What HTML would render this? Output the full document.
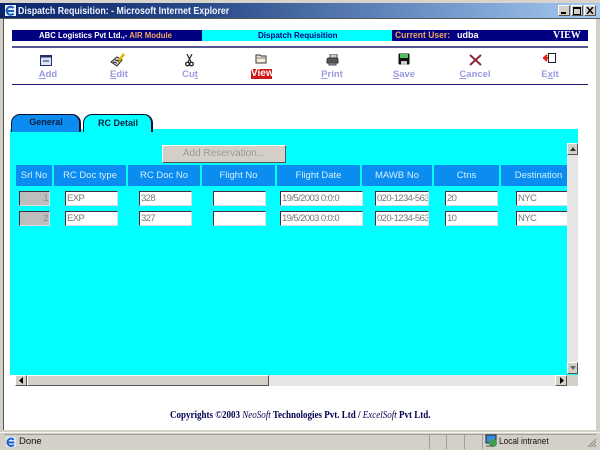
<!DOCTYPE html>
<html>
<head>
<meta charset="utf-8">
<style>
html,body{margin:0;padding:0;background:#fff}
#p{position:relative;width:600px;height:450px;overflow:hidden;background:#fff;font-family:"Liberation Sans",sans-serif;filter:blur(.3px)}
#p div,#p span.a,#p svg{position:absolute}
.t{white-space:nowrap}
.bar{background:#000080;height:11px;top:30px}
.tb{top:69px;width:60px;text-align:center;font-size:9.500px;font-weight:bold;color:#9a9ae0;line-height:12px}
.tb u{text-decoration:underline}
.h{top:165px;height:21px;background:#0a8cf0;color:#d4f0ff;font-size:9.500px;line-height:21px;text-align:center}
.i{height:13px;background:#fff;border-top:1px solid #4a2a3a;border-left:1px solid #4a2a3a;border-right:1px solid #ddd;border-bottom:1px solid #ddd;box-sizing:content-box;font-size:9.500px;line-height:13px;color:#777;padding-left:1px;overflow:hidden;white-space:nowrap;letter-spacing:-.6px}
.s{background:#bdbdc0;text-align:right;padding:0 1px 0 0;color:#888}
.btn{background:#d4d0c8;border-top:1px solid #fff;border-left:1px solid #fff;border-right:1px solid #555;border-bottom:1px solid #555}
</style>
</head>
<body>
<div id="p">
<!-- window frame -->
<div style="left:0;top:0;width:600px;height:3px;background:#d8d4cc"></div>
<div style="left:0;top:3px;width:600px;height:15px;background:linear-gradient(90deg,#0a246a 0%,#2a4c8a 35%,#7ea4d4 80%,#a6caf0 100%)"></div>
<div style="left:0;top:18px;width:600px;height:1px;background:#555"></div>
<div style="left:0;top:19px;width:3px;height:413px;background:#d4d0c8"></div>
<div style="left:3px;top:19px;width:1px;height:413px;background:#555"></div>
<div style="left:596px;top:19px;width:4px;height:431px;background:#d4d0c8"></div>
<!-- title icon -->
<svg style="left:4px;top:4px" width="13" height="13" viewBox="0 0 13 13"><rect x="1" y="1" width="11" height="11" fill="#e8f0ff"/><path d="M3 7h7M9.500 9.500A4 4 0 1 1 9.500 4" fill="none" stroke="#1a5cc0" stroke-width="2"/></svg>
<div class="t" style="left:18px;top:3px;height:15px;line-height:16px;font-size:10.500px;font-weight:bold;color:#f0f4ff;transform:scaleX(.84);transform-origin:0 0">Dispatch Requisition: - Microsoft Internet Explorer</div>
<!-- window buttons -->
<div class="btn" style="left:558px;top:5px;width:10px;height:9px"><div style="left:2px;top:6px;width:5px;height:2px;background:#000"></div></div>
<div class="btn" style="left:571px;top:5px;width:10px;height:9px"><div style="left:1px;top:1px;width:6px;height:5px;border:1px solid #000;border-top-width:2px"></div></div>
<div class="btn" style="left:584px;top:5px;width:10px;height:9px"><svg style="left:1px;top:1px" width="8" height="7" viewBox="0 0 8 7"><path d="M1 0L7 7M7 0L1 7" stroke="#000" stroke-width="1.500"/></svg></div>

<!-- banner -->
<div class="bar" style="left:12px;width:190px"></div>
<div class="bar" style="left:202px;width:190px;background:#00ffff"></div>
<div class="bar" style="left:392px;width:196px"></div>
<div class="t" style="left:39px;top:30px;line-height:11px;font-size:8px;font-weight:bold;color:#fff;transform:scaleX(.97);transform-origin:0 0">ABC Logistics Pvt Ltd.,- <span style="color:#f0a860">AIR Module</span></div>
<div class="t" style="left:258px;top:30px;line-height:11px;font-size:8px;font-weight:bold;color:#000080">Dispatch Requisition</div>
<div class="t" style="left:395px;top:30px;line-height:11px;font-size:9px;font-weight:bold;color:#f0a860;transform:scaleX(.95);transform-origin:0 0">Current User:</div>
<div class="t" style="left:457px;top:30px;line-height:11px;font-size:9px;font-weight:bold;color:#fff">udba</div>
<div class="t" style="left:553px;top:30px;line-height:11px;font-size:10px;font-weight:bold;color:#fff;font-family:'Liberation Serif',serif">VIEW</div>
<div style="left:12px;top:46px;width:576px;height:2px;background:#55558f"></div>
<div style="left:12px;top:84px;width:576px;height:1px;background:#1a1a70"></div>

<!-- toolbar icons -->
<svg style="left:40px;top:55px" width="12" height="11" viewBox="0 0 12 11"><rect x=".5" y=".5" width="11" height="10" fill="#dfe4f4" stroke="#20306a"/><rect x=".5" y=".5" width="11" height="2" fill="#20306a"/><path d="M3 6h6" stroke="#20306a"/></svg>
<svg style="left:110px;top:53px" width="17" height="14" viewBox="0 0 17 14"><path d="M1 9L7 4L12 7L7 13Z" fill="#ddd" stroke="#222"/><path d="M8 9L14 1" stroke="#e0b000" stroke-width="2.500"/><path d="M3 9l4 1M5 7l4 1" stroke="#222"/></svg>
<svg style="left:185px;top:54px" width="9" height="13" viewBox="0 0 9 13"><path d="M2 0L6 8M7 0L3 8" stroke="#333" stroke-width="1.300"/><circle cx="2.500" cy="10" r="1.800" fill="none" stroke="#111" stroke-width="1.200"/><circle cx="6.500" cy="10" r="1.800" fill="none" stroke="#111" stroke-width="1.200"/></svg>
<svg style="left:255px;top:53px" width="13" height="11" viewBox="0 0 13 11"><path d="M1 2h4l1 1h5v7H1Z" fill="#f4eed8" stroke="#333"/><path d="M1 5h10" stroke="#777"/></svg>
<svg style="left:326px;top:54px" width="13" height="12" viewBox="0 0 13 12"><path d="M4 0h7v4H4Z" fill="#ccc" stroke="#555"/><path d="M1 6Q1 4 3 4h8q1 0 1 2v3H1Z" fill="#555" stroke="#333"/><path d="M3 9h7v2H3Z" fill="#aaa" stroke="#444"/></svg>
<svg style="left:398px;top:53px" width="12" height="12" viewBox="0 0 12 12"><rect width="11" height="11" x=".5" y=".5" rx="1" fill="#111"/><rect x="2" y="1" width="8" height="4" fill="#50c060"/><rect x="3" y="8" width="6" height="4" fill="#ccc"/></svg>
<svg style="left:469px;top:54px" width="13" height="12" viewBox="0 0 13 12"><path d="M1 1L12 11M12 1L1 11" stroke="#8a2a3a" stroke-width="2"/></svg>
<svg style="left:543px;top:53px" width="13" height="11" viewBox="0 0 13 11"><rect x="5.500" y=".5" width="7" height="9" fill="#fff" stroke="#222"/><path d="M0 5h5M4 2L1 5L4 8" fill="none" stroke="#e02010" stroke-width="2"/></svg>

<div class="tb t" style="left:18px"><u>A</u>dd</div>
<div class="tb t" style="left:89px"><u>E</u>dit</div>
<div class="tb t" style="left:160px">Cu<u>t</u></div>
<div class="t" style="left:251px;top:69px;width:21px;height:10px;background:#d01818;color:#fff;font-size:10px;font-weight:bold;line-height:10px;text-align:center">View</div>
<div class="tb t" style="left:302px"><u>P</u>rint</div>
<div class="tb t" style="left:374px"><u>S</u>ave</div>
<div class="tb t" style="left:445px"><u>C</u>ancel</div>
<div class="tb t" style="left:520px">E<u>x</u>it</div>

<!-- panel -->
<div style="left:10px;top:129px;width:568px;height:246px;background:#00ffff"></div>

<!-- tabs -->
<div style="left:11px;top:114px;width:67px;height:17px;background:#0a8cf0;border:solid #101030;border-width:1.500px 2px 0 1px;border-radius:9px 9px 0 0"></div>
<div class="t" style="left:11px;top:116px;width:70px;text-align:center;font-size:9px;font-weight:bold;color:#0a2040;line-height:13px">General</div>
<div style="left:83px;top:114px;width:67px;height:17px;background:#00ffff;border:solid #101030;border-width:1.500px 2px 0 1px;border-radius:9px 9px 0 0"></div>
<div class="t" style="left:83px;top:116px;width:70px;text-align:center;font-size:9px;font-weight:bold;color:#0a2040;line-height:14px">RC Detail</div>

<div class="btn" style="left:162px;top:145px;width:122px;height:16px;text-align:center;font-size:10px;line-height:16px;color:#999">Add Reservation...</div>

<div class="h" style="left:16px;width:36px">Srl No</div>
<div class="h" style="left:54px;width:72px">RC Doc type</div>
<div class="h" style="left:128px;width:72px">RC Doc No</div>
<div class="h" style="left:202px;width:73px">Flight No</div>
<div class="h" style="left:277px;width:83px">Flight Date</div>
<div class="h" style="left:362px;width:70px">MAWB No</div>
<div class="h" style="left:434px;width:65px">Ctns</div>
<div class="h" style="left:501px;width:57px;padding-left:9px">Destination</div>

<div class="i s" style="left:19px;top:191px;width:28px">1</div>
<div class="i" style="left:65px;top:191px;width:50px">EXP</div>
<div class="i" style="left:139px;top:191px;width:50px">328</div>
<div class="i" style="left:213px;top:191px;width:50px"></div>
<div class="i" style="left:280px;top:191px;width:80px">19/5/2003 0:0:0</div>
<div class="i" style="left:375px;top:191px;width:51px">020-1234-563</div>
<div class="i" style="left:445px;top:191px;width:50px">20</div>
<div class="i" style="left:516px;top:191px;width:49px;border-right:0">NYC</div>

<div class="i s" style="left:19px;top:211px;width:28px">2</div>
<div class="i" style="left:65px;top:211px;width:50px">EXP</div>
<div class="i" style="left:139px;top:211px;width:50px">327</div>
<div class="i" style="left:213px;top:211px;width:50px"></div>
<div class="i" style="left:280px;top:211px;width:80px">19/5/2003 0:0:0</div>
<div class="i" style="left:375px;top:211px;width:51px">020-1234-563</div>
<div class="i" style="left:445px;top:211px;width:50px">10</div>
<div class="i" style="left:516px;top:211px;width:49px;border-right:0">NYC</div>

<!-- scrollbars -->
<div style="left:567px;top:143px;width:11px;height:231px;background:#e6e6e6"></div>
<div class="btn" style="left:567px;top:143px;width:9px;height:10px"><svg style="left:2px;top:3px" width="6" height="4"><path d="M3 0L6 4H0Z" fill="#333"/></svg></div>
<div class="btn" style="left:567px;top:362px;width:9px;height:10px"><svg style="left:2px;top:3px" width="6" height="4"><path d="M0 0H6L3 4Z" fill="#666"/></svg></div>
<div style="left:15px;top:375px;width:563px;height:11px;background:#e6e6e6"></div>
<div class="btn" style="left:15px;top:375px;width:10px;height:9px"><svg style="left:3px;top:1px" width="4" height="7"><path d="M4 0V7L0 3.500Z" fill="#000"/></svg></div>
<div class="btn" style="left:27px;top:375px;width:240px;height:9px"></div>
<div class="btn" style="left:555px;top:375px;width:10px;height:9px"><svg style="left:4px;top:1px" width="4" height="7"><path d="M0 0V7L4 3.500Z" fill="#000"/></svg></div>
<div style="left:567px;top:375px;width:11px;height:11px;background:#d4d0c8"></div>

<!-- copyright -->
<div class="t" style="left:170px;top:410px;font-family:'Liberation Serif',serif;font-size:10px;font-weight:bold;color:#000050;line-height:12px;transform:scaleX(.90);transform-origin:0 0">Copyrights ©2003 <i style="font-weight:normal">NeoSoft</i> Technologies Pvt. Ltd / <i style="font-weight:normal">ExcelSoft</i> Pvt Ltd.</div>

<!-- status bar -->
<div style="left:0;top:430px;width:600px;height:20px;background:#d4d0c8"></div>
<div style="left:0;top:432px;width:600px;height:1px;background:#f4f4f0"></div>
<div style="left:4px;top:434px;width:592px;height:1px;background:#a0a09a"></div>
<div style="left:429px;top:434px;width:1px;height:15px;background:#a0a09a"></div>
<div style="left:446px;top:434px;width:1px;height:15px;background:#a0a09a"></div>
<div style="left:464px;top:434px;width:1px;height:15px;background:#a0a09a"></div>
<div style="left:482px;top:434px;width:1px;height:15px;background:#a0a09a"></div>
<svg style="left:5px;top:436px" width="12" height="12" viewBox="0 0 13 13"><rect x="1" y="1" width="11" height="11" fill="#dce8ff"/><path d="M3 7h7M9.500 9.500A4 4 0 1 1 9.500 4" fill="none" stroke="#1a5cc0" stroke-width="2"/></svg>
<div class="t" style="left:19px;top:434px;line-height:16px;font-size:9.500px;color:#111">Done</div>
<svg style="left:485px;top:434px" width="13" height="14" viewBox="0 0 13 14"><rect x="1" y="1" width="10" height="8" fill="#3a8ae0" stroke="#223"/><circle cx="8" cy="9" r="4" fill="#40a050"/><path d="M1 12h7" stroke="#555"/></svg>
<div class="t" style="left:499px;top:434px;line-height:16px;font-size:9.500px;color:#111;transform:scaleX(.87);transform-origin:0 0">Local intranet</div>
<svg style="left:587px;top:438px" width="10" height="10"><path d="M9 1L1 9M9 4L4 9M9 7L7 9" stroke="#888"/></svg>
</div>
</body>
</html>
